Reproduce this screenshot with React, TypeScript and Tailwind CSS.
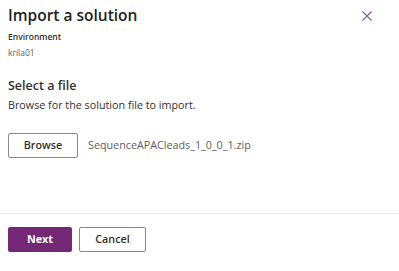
export default function App() {
  return (
    <div
      className="w-[399px] h-[271px] bg-white flex flex-col text-[#323130] overflow-hidden"
      style={{ fontFamily: '"Open Sans", "Noto Sans", sans-serif' }}
    >
      <div className="px-2 pt-[5px] flex-1">
        <div className="flex items-start justify-between">
          <h1 className="text-[15.5px] leading-[20px] font-semibold text-[#201f1e]">Import a solution</h1>
          <button className="mt-[6px] mr-[19px] text-[#8a5a9c]">
            <svg width="10" height="10" viewBox="0 0 10 10" fill="none" stroke="currentColor" strokeWidth="1.1">
              <path d="M0.5 0.5L9.5 9.5M9.5 0.5L0.5 9.5" />
            </svg>
          </button>
        </div>
        <div className="mt-[6px] text-[8.5px] leading-[12px] font-semibold">Environment</div>
        <div className="mt-[4px] text-[8.5px] leading-[12px] text-[#605e5c]">krila01</div>

        <div className="mt-[19px] text-[12.5px] leading-[16px] font-semibold">Select a file</div>
        <div className="mt-[4px] text-[10.75px] leading-[14px]">Browse for the solution file to import.</div>

        <div className="mt-[21px] flex items-center gap-[10px]">
          <button className="w-[70px] h-[25px] border border-[#8a8886] rounded-[2px] text-[10.75px] font-semibold">
            Browse
          </button>
          <span className="text-[10.75px] text-[#605e5c]">SequenceAPACleads_1_0_0_1.zip</span>
        </div>
      </div>
      <div className="h-px bg-[#edebe9]" />
      <div className="px-2 pt-[13px] pb-[19px] flex gap-[7px]">
        <button className="w-[64px] h-[25px] bg-[#742774] rounded-[2px] text-white text-[10.75px] font-bold">
          Next
        </button>
        <button className="w-[67px] h-[25px] border border-[#8a8886] rounded-[2px] text-[10.75px] font-semibold">
          Cancel
        </button>
      </div>
    </div>
  );
}
